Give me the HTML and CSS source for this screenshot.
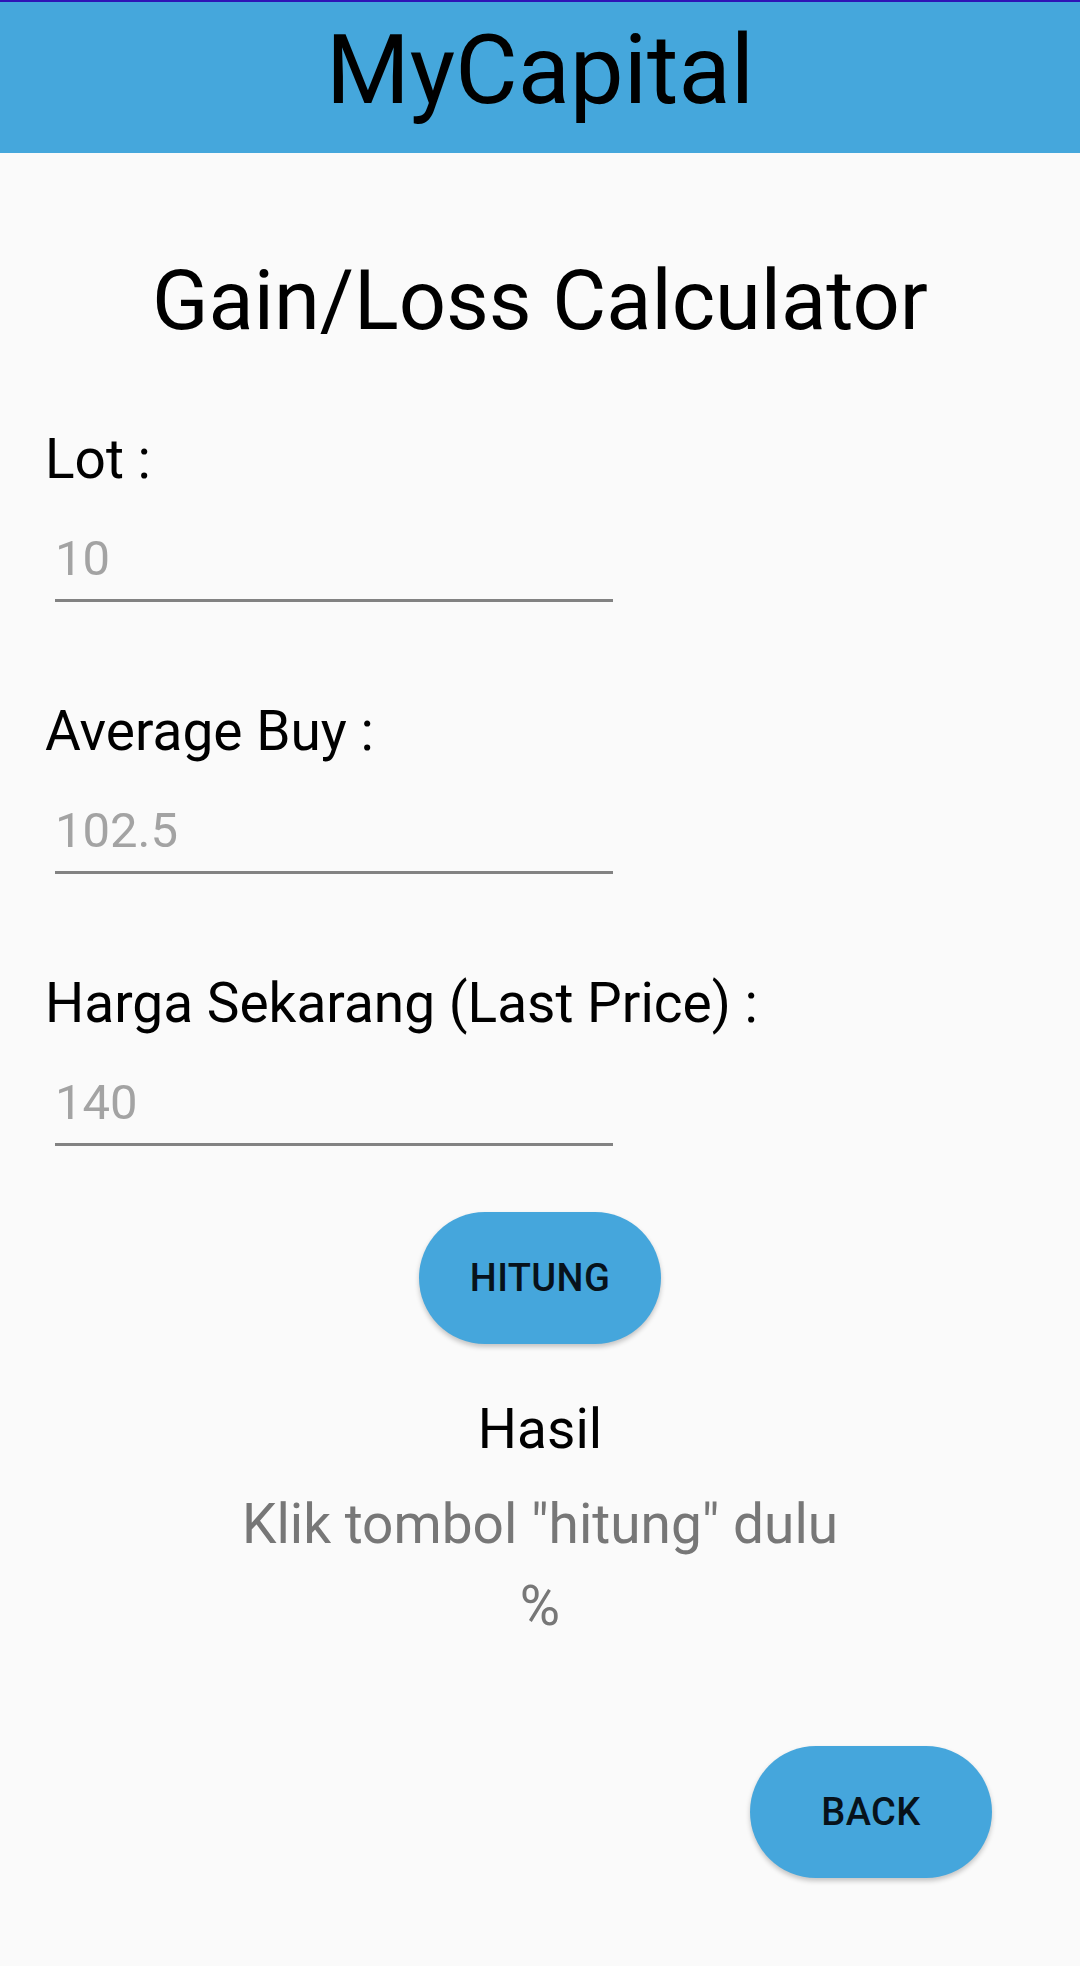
FILE: index.html
```html
<!DOCTYPE html>
<html lang="id">
<head>
<meta charset="utf-8">
<title>MyCapital</title>
<link rel="stylesheet" href="styles.css">
</head>
<body>
<div class="status-line"></div>
<header class="appbar">MyCapital</header>
<main class="content">
  <h1 class="title">Gain/Loss Calculator</h1>

  <div class="field">
    <div class="label">Lot :</div>
    <div class="input"><span class="hint">10</span></div>
  </div>

  <div class="field">
    <div class="label">Average Buy :</div>
    <div class="input"><span class="hint">102.5</span></div>
  </div>

  <div class="field">
    <div class="label">Harga Sekarang (Last Price) :</div>
    <div class="input"><span class="hint">140</span></div>
  </div>

  <div class="btn-row">
    <button class="pill">HITUNG</button>
  </div>

  <div class="result-title">Hasil</div>
  <div class="result-msg">Klik tombol "hitung" dulu</div>
  <div class="result-pct">%</div>

  <div class="back-row">
    <button class="pill">BACK</button>
  </div>
</main>
</body>
</html>
```

FILE: styles.css
```css
html, body {
  margin: 0;
  padding: 0;
}
body {
  background: #fafafa;
  font-family: Roboto, "Liberation Sans", sans-serif;
  color: #000;
  width: 1080px;
  height: 1966px;
  overflow: hidden;
}
.status-line {
  height: 2px;
  background: #2f14b6;
}
.appbar {
  height: 151px;
  box-sizing: border-box;
  padding-bottom: 15px;
  background: #45a7dc;
  font-size: 96px;
  line-height: 136px;
  text-align: center;
  font-weight: 400;
}
.content {
  display: flex;
  flex-direction: column;
}
.title {
  margin: 98px 0 0;
  font-size: 83px;
  line-height: 100px;
  font-weight: 400;
  text-align: center;
}
.field {
  display: flex;
  flex-direction: column;
  padding-left: 45px;
  margin-top: 76px;
}
.field + .field {
  margin-top: 97px;
}
.label {
  font-size: 55px;
  line-height: 64px;
}
.input {
  margin-top: 38px;
  margin-left: 10px;
  width: 558px;
  padding-bottom: 10px;
  border-bottom: 3px solid #828282;
}
.hint {
  display: block;
  font-size: 49px;
  line-height: 60px;
  color: #a3a3a3;
}
.btn-row {
  display: flex;
  justify-content: center;
  margin-top: 66px;
}
.pill {
  width: 242px;
  height: 132px;
  border: none;
  border-radius: 66px;
  background: #45a6dc;
  color: #07121b;
  font-family: Roboto, "Liberation Sans", sans-serif;
  font-weight: 500;
  font-size: 38px;
  letter-spacing: 0.01em;
  box-shadow: 0 3px 5px rgba(0, 0, 0, 0.22);
  padding: 0;
}
.result-title {
  margin-top: 53px;
  font-size: 55px;
  line-height: 64px;
  text-align: center;
}
.result-msg {
  margin-top: 33px;
  font-size: 55px;
  line-height: 60px;
  text-align: center;
  color: #777777;
}
.result-pct {
  margin-top: 22px;
  font-size: 55px;
  line-height: 60px;
  text-align: center;
  color: #777777;
}
.back-row {
  display: flex;
  justify-content: flex-end;
  padding-right: 88px;
  margin-top: 110px;
}
```
